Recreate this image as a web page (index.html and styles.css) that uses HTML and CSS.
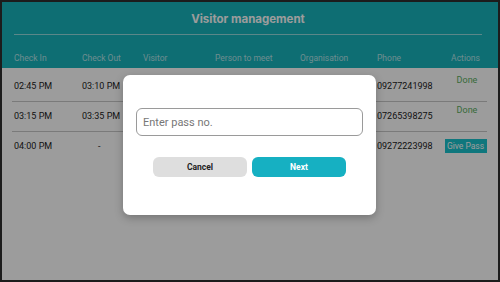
FILE: index.html
```html
<!DOCTYPE html>
<html lang="en">
<head>
    <meta charset="UTF-8">
    <meta name="viewport" content="width=device-width, initial-scale=1.0">
    <title>Visitor management</title>
    <link rel="stylesheet" href="styles.css">
</head>
<body>

    <div class="frame">

        <!-- Teal header with title and column names -->
        <header class="topbar">
            <h1>Visitor management</h1>
            <div class="cols head">
                <span>Check In</span>
                <span>Check Out</span>
                <span>Visitor</span>
                <span>Person to meet</span>
                <span>Organisation</span>
                <span>Phone</span>
                <span class="act">Actions</span>
            </div>
        </header>

        <!-- Visitor rows -->
        <div class="rows">
            <div class="cols row">
                <span>02:45 PM</span>
                <span>03:10 PM</span>
                <span>Rahul Sharma</span>
                <span>Anita Desai</span>
                <span>Infosys</span>
                <span>09277241998</span>
                <span class="act done">Done</span>
            </div>
            <div class="cols row">
                <span>03:15 PM</span>
                <span>03:35 PM</span>
                <span>Priya Nair</span>
                <span>Vikram Rao</span>
                <span>Wipro</span>
                <span>07265398275</span>
                <span class="act done">Done</span>
            </div>
            <div class="cols row last">
                <span>04:00 PM</span>
                <span class="dash">-</span>
                <span>Arjun Mehta</span>
                <span>Sunil Kumar</span>
                <span>TCS</span>
                <span>09272223998</span>
                <span class="act"><button class="give-pass">Give Pass</button></span>
            </div>
        </div>

        <!-- Pass number dialog -->
        <div class="overlay">
            <div class="modal">
                <input type="text" class="pass-input" placeholder="Enter pass no.">
                <div class="modal-actions">
                    <button class="btn btn-cancel">Cancel</button>
                    <button class="btn btn-next">Next</button>
                </div>
            </div>
        </div>

    </div>

</body>
</html>
```

FILE: styles.css
```css
/* Reset */
* {
    margin: 0;
    padding: 0;
    box-sizing: border-box;
}

body {
    width: 500px;
    height: 282px;
    background: #111;
    font-family: 'Roboto', sans-serif;
    overflow: hidden;
}

/* Device frame */
.frame {
    position: relative;
    width: 500px;
    height: 282px;
    border: 2px solid #1c1c1c;
    background: #ffffff;
    overflow: hidden;
}

/* Header */
.topbar {
    height: 66px;
    background: #17b4bd;
    padding: 0 16px 0 12px;
}

.topbar h1 {
    font-family: 'Inter', sans-serif;
    font-size: 11.5px;
    font-weight: 700;
    color: #ffffff;
    text-align: center;
    line-height: 20px;
    padding: 7px 0 5px;
    border-bottom: 1px solid rgba(255, 255, 255, 0.55);
}

/* Shared column grid */
.cols {
    display: grid;
    grid-template-columns: 68px 61px 72px 85px 77px 67px 43px;
}

.cols .act {
    text-align: center;
}

.head {
    margin-top: 16px;
    font-size: 8.5px;
    line-height: 14px;
    color: rgba(255, 255, 255, 0.68);
}

/* Rows */
.rows {
    padding-top: 4px;
    margin: 0 11px 0 10px;
}

.row {
    height: 30px;
    padding: 8px 0 0 2px;
    font-size: 9px;
    line-height: 12px;
    color: #222;
    border-bottom: 1px solid #c8c8c8;
}

.row.last {
    border-bottom: none;
}

.row .dash {
    padding-left: 16px;
}

.done {
    margin-top: -6px;
    padding-left: 3px;
    color: #5aae5e;
}

.give-pass {
    margin-top: -4px;
    height: 14px;
    width: 42px;
    border: none;
    background: #19c3cc;
    color: #ffffff;
    font-family: 'Roboto', sans-serif;
    font-size: 8.5px;
}

/* Dim layer and dialog */
.overlay {
    position: absolute;
    inset: 0;
    background: rgba(0, 0, 0, 0.39);
    display: flex;
    justify-content: center;
    align-items: flex-start;
    padding-top: 73px;
}

.modal {
    width: 253px;
    height: 140px;
    margin-left: -1px;
    background: #ffffff;
    border-radius: 7px;
    padding: 33px 13px 0;
    box-shadow: 0 3px 8px rgba(0, 0, 0, 0.25);
}

.pass-input {
    display: block;
    width: 227px;
    height: 28px;
    border: 1px solid #9a9a9a;
    border-radius: 6px;
    padding: 0 6px;
    font-family: 'Roboto', sans-serif;
    font-size: 11px;
    color: #333;
    outline: none;
}

.pass-input::placeholder {
    color: #777;
}

.modal-actions {
    display: flex;
    justify-content: center;
    gap: 5px;
    margin-top: 21px;
}

.btn {
    width: 94px;
    height: 20px;
    border: none;
    border-radius: 6px;
    font-family: 'Roboto', sans-serif;
    font-size: 8.5px;
    font-weight: 700;
}

.btn-cancel {
    background: #dedede;
    color: #222;
}

.btn-next {
    background: #16b0c2;
    color: #ffffff;
}
```
